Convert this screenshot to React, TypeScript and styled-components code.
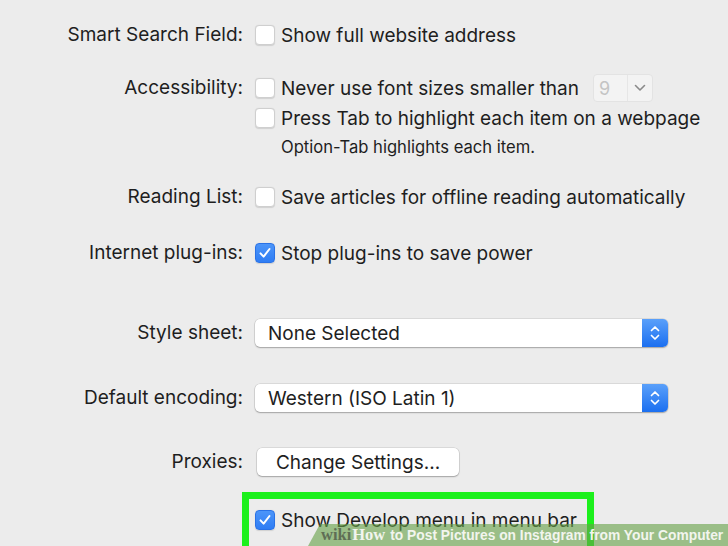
import React from "react";
import styled, { createGlobalStyle } from "styled-components";

const Global = createGlobalStyle`
  html, body { margin: 0; padding: 0; }
  body {
    background: #ececec;
    width: 728px;
    height: 546px;
    overflow: hidden;
    font-family: Inter, "Noto Sans", "Liberation Sans", sans-serif;
    color: #1e1e1e;
  }
`;

const Page = styled.div`
  position: relative;
  width: 728px;
  height: 546px;
  overflow: hidden;
  padding-top: 20px;
  box-sizing: border-box;
`;

const Row = styled.div<{ $mt?: number }>`
  display: grid;
  grid-template-columns: 243px 1fr;
  column-gap: 12px;
  margin-top: ${(p) => p.$mt ?? 0}px;
  align-items: start;
`;

const Label = styled.div`
  text-align: right;
  font-size: 19px;
  line-height: 30px;
  white-space: nowrap;
`;

const Controls = styled.div`
  display: flex;
  flex-direction: column;
`;

const CheckLine = styled.div`
  display: flex;
  align-items: center;
  height: 30px;
  gap: 6px;
  font-size: 19px;
  white-space: nowrap;
`;

const Box = styled.span<{ $on?: boolean }>`
  width: 20px;
  height: 20px;
  box-sizing: border-box;
  border-radius: 4px;
  display: inline-flex;
  align-items: center;
  justify-content: center;
  flex: none;
  background: ${(p) => (p.$on ? "linear-gradient(#4c95f9, #2f7df4)" : "#fff")};
  border: 1px solid ${(p) => (p.$on ? "#2a72e6" : "#cfcfcf")};
  box-shadow: 0 0.5px 1px rgba(0, 0, 0, 0.12);
`;

const Note = styled.div`
  font-size: 16.6px;
  line-height: 28px;
  padding-left: 26px;
  white-space: nowrap;
`;

const Mini = styled.span`
  margin-left: 8px;
  width: 60px;
  height: 28px;
  box-sizing: border-box;
  border: 1px solid #e3e3e3;
  border-radius: 4px;
  background: #f3f3f3;
  display: inline-flex;
  align-items: stretch;
  color: #c4c4c4;
  font-size: 18px;
`;

const MiniValue = styled.span`
  width: 34px;
  padding-left: 5px;
  display: flex;
  align-items: center;
  border-right: 1px solid #e6e6e6;
  box-sizing: border-box;
`;

const MiniArrow = styled.span`
  flex: 1;
  display: flex;
  align-items: center;
  justify-content: center;
`;

const Select = styled.div`
  width: 413px;
  height: 28px;
  margin-top: 1px;
  box-sizing: border-box;
  background: #fff;
  border-radius: 5px;
  box-shadow: 0 0 0 0.5px rgba(0, 0, 0, 0.15), 0 1px 1.5px rgba(0, 0, 0, 0.25);
  display: flex;
  align-items: center;
  justify-content: space-between;
  font-size: 19px;
  overflow: hidden;
`;

const SelectText = styled.span`
  padding-left: 13px;
`;

const Stepper = styled.span`
  width: 26px;
  height: 100%;
  background: linear-gradient(#5aa0fa, #1b6ff0);
  display: flex;
  align-items: center;
  justify-content: center;
`;

const Button = styled.div`
  width: 202px;
  height: 28px;
  margin-top: 1px;
  margin-left: 2px;
  box-sizing: border-box;
  background: #fff;
  border-radius: 5px;
  box-shadow: 0 0 0 0.5px rgba(0, 0, 0, 0.15), 0 1px 1.5px rgba(0, 0, 0, 0.25);
  display: flex;
  align-items: center;
  justify-content: center;
  font-size: 19px;
`;

const Highlight = styled.div`
  margin-top: 15px;
  margin-left: 242px;
  width: 352px;
  height: 70px;
  box-sizing: border-box;
  border: 7px solid #1cf01c;
  padding: 6px 0 0 6px;
`;

const Watermark = styled.div`
  position: absolute;
  right: 0;
  bottom: 0;
  width: 420px;
  height: 22px;
  background: rgba(104, 162, 72, 0.62);
  clip-path: polygon(12px 0, 100% 0, 100% 100%, 0 100%);
  display: flex;
  align-items: center;
  padding-left: 13px;
  box-sizing: border-box;
  white-space: nowrap;
`;

const Wiki = styled.span`
  font-family: "Liberation Serif", "DejaVu Serif", serif;
  font-weight: 700;
  font-size: 16.5px;
  color: #5f6e55;
`;

const How = styled.span`
  font-family: "Liberation Serif", "DejaVu Serif", serif;
  font-weight: 700;
  font-size: 16.5px;
  color: #f2f5ee;
  margin-left: 1px;
`;

const Title = styled.span`
  font-family: "Liberation Sans", Arial, sans-serif;
  font-weight: 700;
  font-size: 13.8px;
  color: #f2f5ee;
  margin-left: 5px;
`;

const Check = () => (
  <svg width="14" height="14" viewBox="0 0 14 14">
    <path d="M2.5 7.4 L5.6 10.6 L11.5 3" fill="none" stroke="#fff" strokeWidth="2" strokeLinecap="round" strokeLinejoin="round" />
  </svg>
);

const Chev = () => (
  <svg width="12" height="8" viewBox="0 0 12 8">
    <path d="M1.5 1.5 L6 6 L10.5 1.5" fill="none" stroke="#8a8a8a" strokeWidth="1.6" strokeLinecap="round" strokeLinejoin="round" />
  </svg>
);

const Updown = () => (
  <svg width="12" height="18" viewBox="0 0 12 18">
    <path d="M2.5 6.5 L6 3 L9.5 6.5 M2.5 11.5 L6 15 L9.5 11.5" fill="none" stroke="#fff" strokeWidth="1.7" strokeLinecap="round" strokeLinejoin="round" />
  </svg>
);

const CheckItem = ({ on, children }: { on?: boolean; children: React.ReactNode }) => (
  <CheckLine>
    <Box $on={on}>{on && <Check />}</Box>
    <span>{children}</span>
  </CheckLine>
);

export default function App() {
  return (
    <Page>
      <Global />
      <Row>
        <Label>Smart Search Field:</Label>
        <Controls>
          <CheckItem>Show full website address</CheckItem>
        </Controls>
      </Row>
      <Row $mt={23}>
        <Label>Accessibility:</Label>
        <Controls>
          <CheckLine>
            <Box />
            <span>Never use font sizes smaller than</span>
            <Mini>
              <MiniValue>9</MiniValue>
              <MiniArrow>
                <Chev />
              </MiniArrow>
            </Mini>
          </CheckLine>
          <CheckItem>Press Tab to highlight each item on a webpage</CheckItem>
          <Note>Option-Tab highlights each item.</Note>
        </Controls>
      </Row>
      <Row $mt={21}>
        <Label>Reading List:</Label>
        <Controls>
          <CheckItem>Save articles for offline reading automatically</CheckItem>
        </Controls>
      </Row>
      <Row $mt={26}>
        <Label>Internet plug-ins:</Label>
        <Controls>
          <CheckItem on>Stop plug-ins to save power</CheckItem>
        </Controls>
      </Row>
      <Row $mt={50}>
        <Label>Style sheet:</Label>
        <Select>
          <SelectText>None Selected</SelectText>
          <Stepper>
            <Updown />
          </Stepper>
        </Select>
      </Row>
      <Row $mt={35}>
        <Label>Default encoding:</Label>
        <Select>
          <SelectText>Western (ISO Latin 1)</SelectText>
          <Stepper>
            <Updown />
          </Stepper>
        </Select>
      </Row>
      <Row $mt={34}>
        <Label>Proxies:</Label>
        <Button>Change Settings...</Button>
      </Row>
      <Highlight>
        <CheckItem on>Show Develop menu in menu bar</CheckItem>
      </Highlight>
      <Watermark>
        <Wiki>wiki</Wiki>
        <How>How</How>
        <Title>to Post Pictures on Instagram from Your Computer</Title>
      </Watermark>
    </Page>
  );
}
